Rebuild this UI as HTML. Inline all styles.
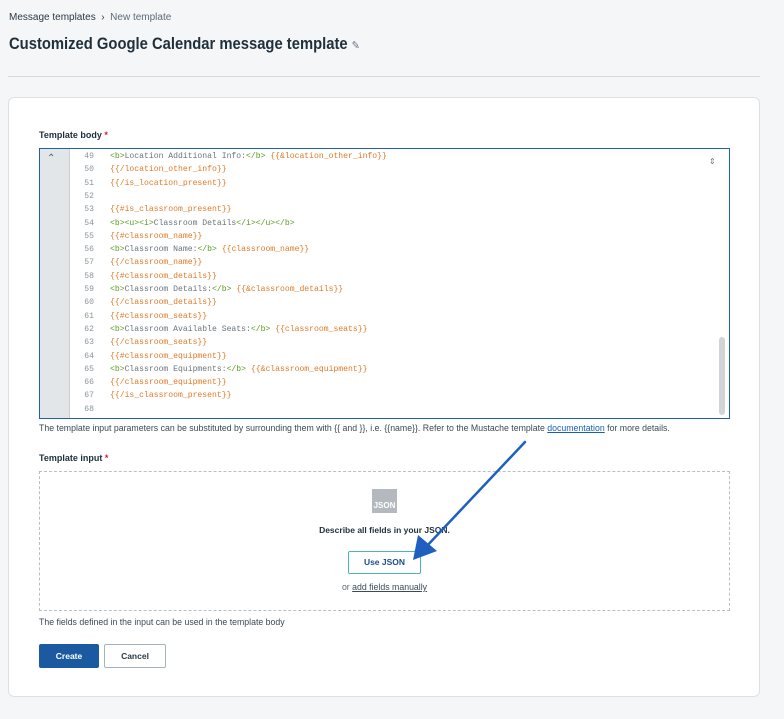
<!DOCTYPE html>
<html><head><style>
*{margin:0;padding:0;box-sizing:border-box}
body{width:784px;height:719px;background:#f5f6f8;font-family:"Liberation Sans",sans-serif;position:relative;overflow:hidden;color:#1d2b36}
.abs{position:absolute}
.bc{left:9px;top:12px;font-size:10px;color:#2a3a46}
.bc span{color:#5b6b78}
h1{position:absolute;left:9px;top:34px;font-size:17px;font-weight:bold;color:#1f2f3b;transform:scaleX(0.87);transform-origin:left;white-space:nowrap}
.hr{left:8px;top:76px;width:752px;height:1px;background:#d6dbe0}
.card{left:8px;top:97px;width:752px;height:600px;background:#fff;border:1px solid #dde1e5;border-radius:6px}
.lbl{font-size:9px;font-weight:bold;color:#1f2f3b}
.lbl i{color:#d21f2a;font-style:normal}
.ed{left:39px;top:148px;width:691px;height:271px;border:1px solid #2060b0;background:#fff;overflow:hidden}
.g1{left:0;top:0;width:30px;height:100%;background:#e2e6e9;border-right:1px solid #c9cfd4}
.code{left:0;top:1px;font-family:"Liberation Mono",monospace;font-size:8.1px;line-height:13.3px}
.ln{position:absolute;left:32px;width:22px;text-align:right;color:#8a949c}
.tx{position:absolute;left:70px;white-space:pre;color:#6a737a}
.t{color:#5a9a1e}.m{color:#e07a28}
.sb{left:679px;top:188px;width:6px;height:78px;background:#d0d4d8;border-radius:3px}
.help{font-size:8.75px;color:#3a4a56;white-space:nowrap}
.help a{color:#1a5fb4;text-decoration:underline}
.dz{left:39px;top:471px;width:691px;height:140px;border:1px dashed #b8bfc5}
.btn{font-size:8.5px;font-weight:bold;border-radius:2px;text-align:center}
</style></head><body>
<div class="abs bc">Message templates &nbsp;›&nbsp; <span>New template</span></div>
<h1>Customized Google Calendar message template <span style="font-size:11px;color:#66737e;font-weight:normal">&#9998;</span></h1>
<div class="abs hr"></div>
<div class="abs card"></div>
<div class="abs lbl" style="left:39px;top:130px">Template body <i>*</i></div>
<div class="abs ed">
<div class="abs g1"></div>
<div class="abs" style="left:7px;top:4px;font-size:10px;color:#55606a">&#8963;</div>
<div class="abs code">
<div class="ln" style="top:0">49</div><div class="tx" style="top:0"><span class="t">&lt;b&gt;</span>Location Additional Info:<span class="t">&lt;/b&gt;</span> <span class="m">{{&amp;location_other_info}}</span></div>
<div class="ln" style="top:13.3px">50</div><div class="tx m" style="top:13.3px">{{/location_other_info}}</div>
<div class="ln" style="top:26.6px">51</div><div class="tx m" style="top:26.6px">{{/is_location_present}}</div>
<div class="ln" style="top:39.9px">52</div>
<div class="ln" style="top:53.2px">53</div><div class="tx m" style="top:53.2px">{{#is_classroom_present}}</div>
<div class="ln" style="top:66.5px">54</div><div class="tx" style="top:66.5px"><span class="t">&lt;b&gt;&lt;u&gt;&lt;i&gt;</span>Classroom Details<span class="t">&lt;/i&gt;&lt;/u&gt;&lt;/b&gt;</span></div>
<div class="ln" style="top:79.8px">55</div><div class="tx m" style="top:79.8px">{{#classroom_name}}</div>
<div class="ln" style="top:93.1px">56</div><div class="tx" style="top:93.1px"><span class="t">&lt;b&gt;</span>Classroom Name:<span class="t">&lt;/b&gt;</span> <span class="m">{{classroom_name}}</span></div>
<div class="ln" style="top:106.4px">57</div><div class="tx m" style="top:106.4px">{{/classroom_name}}</div>
<div class="ln" style="top:119.7px">58</div><div class="tx m" style="top:119.7px">{{#classroom_details}}</div>
<div class="ln" style="top:133px">59</div><div class="tx" style="top:133px"><span class="t">&lt;b&gt;</span>Classroom Details:<span class="t">&lt;/b&gt;</span> <span class="m">{{&amp;classroom_details}}</span></div>
<div class="ln" style="top:146.3px">60</div><div class="tx m" style="top:146.3px">{{/classroom_details}}</div>
<div class="ln" style="top:159.6px">61</div><div class="tx m" style="top:159.6px">{{#classroom_seats}}</div>
<div class="ln" style="top:172.9px">62</div><div class="tx" style="top:172.9px"><span class="t">&lt;b&gt;</span>Classroom Available Seats:<span class="t">&lt;/b&gt;</span> <span class="m">{{classroom_seats}}</span></div>
<div class="ln" style="top:186.2px">63</div><div class="tx m" style="top:186.2px">{{/classroom_seats}}</div>
<div class="ln" style="top:199.5px">64</div><div class="tx m" style="top:199.5px">{{#classroom_equipment}}</div>
<div class="ln" style="top:212.8px">65</div><div class="tx" style="top:212.8px"><span class="t">&lt;b&gt;</span>Classroom Equipments:<span class="t">&lt;/b&gt;</span> <span class="m">{{&amp;classroom_equipment}}</span></div>
<div class="ln" style="top:226.1px">66</div><div class="tx m" style="top:226.1px">{{/classroom_equipment}}</div>
<div class="ln" style="top:239.4px">67</div><div class="tx m" style="top:239.4px">{{/is_classroom_present}}</div>
<div class="ln" style="top:252.7px">68</div>
</div>
<div class="abs" style="left:669px;top:8px;font-size:8px;color:#777">&#8661;</div>
<div class="abs sb"></div>
</div>
<div class="abs help" style="left:39px;top:423px">The template input parameters can be substituted by surrounding them with {{ and }}, i.e. {{name}}. Refer to the Mustache template <a>documentation</a> for more details.</div>
<div class="abs lbl" style="left:39px;top:453px">Template input <i>*</i></div>
<div class="abs dz"></div>
<div class="abs" style="left:372px;top:489px;width:25px;height:24px;background:#b3b9bf;color:#fff;font-size:8px;font-weight:bold;text-align:center;padding-top:12px;line-height:10px">JSON</div>
<div class="abs" style="left:39px;top:525px;width:691px;text-align:center;font-size:8.5px;font-weight:bold;color:#1f2f3b">Describe all fields in your JSON.</div>
<div class="abs btn" style="left:348px;top:551px;width:73px;height:23px;border:1px solid #4ab5b8;color:#1a4f8a;line-height:21px">Use JSON</div>
<div class="abs help" style="left:39px;top:582px;width:691px;text-align:center;color:#5b6b78">or <span style="text-decoration:underline;color:#3a4a56">add fields manually</span></div>
<div class="abs help" style="left:39px;top:617px">The fields defined in the input can be used in the template body</div>
<div class="abs btn" style="left:39px;top:644px;width:60px;height:24px;background:#1b5aa0;color:#fff;line-height:24px">Create</div>
<div class="abs btn" style="left:104px;top:644px;width:62px;height:24px;border:1px solid #aab2b9;color:#2a3a46;line-height:22px;background:#fff">Cancel</div>
<svg class="abs" style="left:0;top:0" width="784" height="719">
<line x1="525" y1="442" x2="425" y2="548" stroke="#1f5fc0" stroke-width="2.5" stroke-linecap="round"/>
<polygon points="413,560 418,535 437,551" fill="#1f5fc0"/>
</svg>
</body></html>
